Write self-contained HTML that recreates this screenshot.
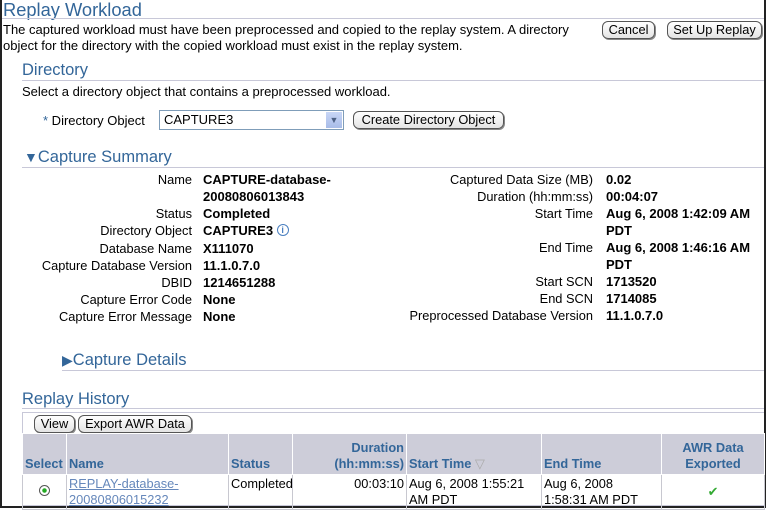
<!DOCTYPE html>
<html><head><style>
*{margin:0;padding:0;box-sizing:border-box}
body{width:766px;height:508px;overflow:hidden;background:#fff;font-family:"Liberation Sans",sans-serif;font-size:12.8px;color:#000;position:relative}
.frame{position:absolute;left:0;top:0;width:766px;height:508px;border-left:2px solid #222;border-right:2px solid #222;border-bottom:2px solid #222}
.a{position:absolute;white-space:nowrap}
.h{color:#336699}
.rule{position:absolute;height:1px;background:#c8c8d8}
.btn{position:absolute;border:1px solid #555;border-radius:6px;background:linear-gradient(#fff,#e4e4e4);font-size:12.8px;text-align:center;line-height:15px;height:18px;box-shadow:1px 1px 0 #888}
.l{position:absolute;text-align:right;white-space:nowrap}
.v{position:absolute;font-weight:bold;white-space:nowrap;font-size:13px}
table{table-layout:fixed}
th{background:#cdcdd9;color:#336699;font-weight:bold;font-size:12.8px;vertical-align:bottom;padding:2px 2px;border:1px solid #fff;line-height:16px;white-space:nowrap;overflow:hidden}
td{font-size:12.8px;border:1px solid #c8c8d0;padding:1px 2px;vertical-align:top;line-height:16px;overflow:hidden}
</style></head><body>
<div class="frame"></div>
<div class="a h" style="left:3px;top:-1px;font-size:18.3px">Replay Workload</div>
<div class="rule" style="left:2px;top:18px;width:762px"></div>
<div class="a" style="left:3px;top:22px;line-height:16px;font-size:13px">The captured workload must have been preprocessed and copied to the replay system. A directory<br>object for the directory with the copied workload must exist in the replay system.</div>
<div class="btn" style="left:602px;top:21px;width:53px">Cancel</div>
<div class="btn" style="left:667px;top:21px;width:95px">Set Up Replay</div>

<div class="a h" style="left:22px;top:61px;font-size:16.5px">Directory</div>
<div class="rule" style="left:22px;top:80px;width:742px"></div>
<div class="a" style="left:22px;top:84px;font-size:13px">Select a directory object that contains a preprocessed workload.</div>
<div class="a" style="left:43px;top:113px;font-size:13px"><span style="color:#336699">*</span> Directory Object</div>
<div class="a" style="left:159px;top:110px;width:185px;height:20px;border:1px solid #7f9db9;padding-left:4px;line-height:18px;font-size:13px">CAPTURE3
<div style="position:absolute;right:1px;top:1px;width:16px;height:16px;background:linear-gradient(#c8d6f6,#a8bce8);color:#4d6185;font-size:9px;line-height:16px;text-align:center">&#9660;</div></div>
<div class="btn" style="left:353px;top:111px;width:151px">Create Directory Object</div>

<div class="a h" style="left:24px;top:148px;font-size:16.5px"><span style="font-size:14px">&#9660;</span>Capture Summary</div>
<div class="rule" style="left:22px;top:167px;width:742px"></div>

<div class="l" style="right:574px;top:171px;line-height:17px">Name<br><br>Status<br>Directory Object</div>
<div class="l" style="right:574px;top:240px;line-height:17px">Database Name<br>Capture Database Version<br>DBID<br>Capture Error Code<br>Capture Error Message</div>
<div class="v" style="left:203px;top:171px;line-height:17px">CAPTURE-database-<br>20080806013843<br>Completed</div>
<div class="v" style="left:203px;top:223px">CAPTURE3 <span style="display:inline-block;width:12px;height:12px;border:1px solid #4a7fc0;border-radius:50%;color:#4a7fc0;font-size:9px;line-height:10px;text-align:center;vertical-align:2px">i</span></div>
<div class="v" style="left:203px;top:240px;line-height:17px">X111070<br>11.1.0.7.0<br>1214651288<br>None<br>None</div>

<div class="l" style="right:173px;top:171px;line-height:17px">Captured Data Size (MB)<br>Duration (hh:mm:ss)<br>Start Time<br><br>End Time<br><br>Start SCN<br>End SCN<br>Preprocessed Database Version</div>
<div class="v" style="left:606px;top:171px;line-height:17px">0.02<br>00:04:07<br>Aug 6, 2008 1:42:09 AM<br>PDT<br>Aug 6, 2008 1:46:16 AM<br>PDT<br>1713520<br>1714085<br>11.1.0.7.0</div>

<div class="a h" style="left:62px;top:351px;font-size:16.5px"><span style="font-size:14px">&#9654;</span>Capture Details</div>
<div class="rule" style="left:62px;top:370px;width:702px"></div>

<div class="a h" style="left:22px;top:390px;font-size:16.5px">Replay History</div>
<div class="rule" style="left:22px;top:408px;width:742px"></div>
<div class="a" style="left:22px;top:412px;width:742px;height:94px;border:1px solid #c8c8d8;border-right:none"></div>
<div class="btn" style="left:34px;top:415px;width:41px">View</div>
<div class="btn" style="left:78px;top:415px;width:114px">Export AWR Data</div>
<table style="position:absolute;left:22px;top:433px;width:742px;border-collapse:collapse">
<colgroup><col style="width:44px"><col style="width:162px"><col style="width:64px"><col style="width:114px"><col style="width:135px"><col style="width:120px"><col style="width:103px"></colgroup>
<tr style="height:41px">
<th style="text-align:left">Select</th>
<th style="text-align:left">Name</th>
<th style="text-align:left">Status</th>
<th style="text-align:right">Duration<br>(hh:mm:ss)</th>
<th style="text-align:left">Start Time <span style="color:#aaa;font-weight:normal">&#9661;</span></th>
<th style="text-align:left">End Time</th>
<th style="text-align:center">AWR Data<br>Exported</th>
</tr>
<tr style="height:33px">
<td style="text-align:center;vertical-align:middle"><span style="display:inline-block;width:11px;height:11px;border:1px solid #555;border-radius:50%;background:radial-gradient(#2a2 30%,#fff 40%)"></span></td>
<td><span style="color:#6688bb;text-decoration:underline">REPLAY-database-<br>20080806015232</span></td>
<td>Completed</td>
<td style="text-align:right">00:03:10</td>
<td>Aug 6, 2008 1:55:21<br>AM PDT</td>
<td>Aug 6, 2008<br>1:58:31 AM PDT</td>
<td style="text-align:center;vertical-align:middle;color:#3a3">&#10004;</td>
</tr>
</table>
</body></html>
